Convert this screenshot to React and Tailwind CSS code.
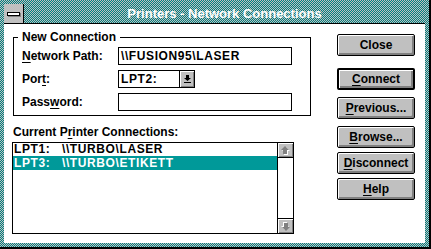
import React from 'react';

const dither = 'bg-[repeating-conic-gradient(#008080_0_25%,#c0c0c0_0_50%)] bg-[length:2px_2px]';

function U({ children }) {
    return <span className="underline underline-offset-[2px] decoration-1">{children}</span>;
}

function PushButton({ children, isDefault, className }) {
    const border = isDefault ? 'border-2' : 'border';
    return (
        <div
            className={`${className} ${border} h-[22px] w-[78px] rounded-[2px] border-black bg-[#c0c0c0] shadow-[inset_1px_1px_0_#fff,inset_-2px_-2px_0_#808080] flex items-center justify-center leading-[14px]`}
        >
            {children}
        </div>
    );
}

function ScrollArrow({ down }) {
    return (
        <svg width="9" height="9" viewBox="0 0 9 9" className={down ? 'rotate-180' : ''}>
            <path d="M5 1 L9 5 L7 5 L7 9 L3 9 L3 5 L1 5 Z" fill="#fff" />
            <path d="M4 0 L8 4 L6 4 L6 8 L2 8 L2 4 L0 4 Z" fill="#808080" />
        </svg>
    );
}

export default function App() {
    return (
        <div className="w-[431px] h-[249px] bg-black font-['Liberation_Sans',Arial,sans-serif] text-[12px] font-bold text-black overflow-hidden">
            <div className={`w-[429px] h-[247px] p-[4px] ${dither}`}>
                <div className="w-[421px] h-[239px] bg-white flex flex-col">
                    {/* Title bar */}
                    <div className={`h-[20px] flex border-b border-black ${dither}`}>
                        <div className="w-[20px] h-full bg-[#c0c0c0] border-r border-black flex items-center justify-center">
                            <div className="w-[13px] h-[4px] border border-black bg-white shadow-[1px_1px_0_#808080]" />
                        </div>
                        <div className="flex-1 flex items-center justify-center text-white text-[13px] leading-[16px]">
                            Printers - Network Connections
                        </div>
                    </div>

                    {/* Client area */}
                    <div className="flex flex-1">
                        <div className="w-[306px] pl-[8px] flex flex-col">
                            {/* New Connection group */}
                            <div className="relative mt-[13px] ml-[1px] w-[298px] h-[79px] border border-black pt-[9px] pl-[8px] flex flex-col gap-[5px]">
                                <span className="absolute left-[4px] top-[-8px] bg-white px-[4px] leading-[14px]">
                                    New Connection
                                </span>
                                <div className="flex items-center h-[18px]">
                                    <span className="w-[96px]"><U>N</U>etwork Path:</span>
                                    <div className="w-[174px] h-[18px] border border-black pl-[2px] leading-[16px] tracking-[0.6px]">
                                        {'\\\\FUSION95\\LASER'}
                                    </div>
                                </div>
                                <div className="flex items-center h-[18px]">
                                    <span className="w-[96px]">Por<U>t</U>:</span>
                                    <div className="w-[77px] h-[18px] border border-black flex">
                                        <div className="flex-1 pl-[2px] leading-[16px] tracking-[0.6px]">LPT2:</div>
                                        <div className="w-[15px] h-full border-l border-black bg-[#c0c0c0] shadow-[inset_1px_1px_0_#fff,inset_-1px_-1px_0_#808080] flex flex-col items-center justify-center gap-[1px]">
                                            <svg width="7" height="6" viewBox="0 0 7 6">
                                                <path d="M2 0 H5 V3 H7 L3.5 6 L0 3 H2 Z" fill="#000" />
                                            </svg>
                                            <div className="w-[7px] h-[1px] bg-black" />
                                        </div>
                                    </div>
                                </div>
                                <div className="flex items-center h-[18px]">
                                    <span className="w-[96px]">Pass<U>w</U>ord:</span>
                                    <div className="w-[174px] h-[18px] border border-black" />
                                </div>
                            </div>

                            <div className="mt-[9px] ml-[1px] leading-[14px]">
                                Current P<U>r</U>inter Connections:
                            </div>

                            {/* Listbox */}
                            <div className="mt-[3px] w-[282px] h-[92px] border border-black flex tracking-[0.6px]">
                                <div className="flex-1 flex flex-col">
                                    <div className="h-[13px] leading-[13px] pl-[1px] flex">
                                        <span className="w-[48px]">LPT1:</span>
                                        <span>{'\\\\TURBO\\LASER'}</span>
                                    </div>
                                    <div className="h-[14px] leading-[14px] pl-[1px] flex bg-[#009999] text-white">
                                        <span className="w-[48px]">LPT3:</span>
                                        <span>{'\\\\TURBO\\ETIKETT'}</span>
                                    </div>
                                </div>
                                <div className="w-[16px] border-l border-black flex flex-col justify-between">
                                    <div className="h-[15px] border-b border-black bg-[#c0c0c0] shadow-[inset_1px_1px_0_#fff,inset_-1px_-1px_0_#808080] flex items-center justify-center">
                                        <ScrollArrow />
                                    </div>
                                    <div className="h-[15px] border-t border-black bg-[#c0c0c0] shadow-[inset_1px_1px_0_#fff,inset_-1px_-1px_0_#808080] flex items-center justify-center">
                                        <ScrollArrow down />
                                    </div>
                                </div>
                            </div>
                        </div>

                        {/* Buttons */}
                        <div className="ml-[27px] flex flex-col">
                            <PushButton className="mt-[10px]">Close</PushButton>
                            <PushButton className="mt-[12px]" isDefault><U>C</U>onnect</PushButton>
                            <PushButton className="mt-[7px]"><U>P</U>revious...</PushButton>
                            <PushButton className="mt-[7px]"><U>B</U>rowse...</PushButton>
                            <PushButton className="mt-[4px]"><U>D</U>isconnect</PushButton>
                            <PushButton className="mt-[4px]"><U>H</U>elp</PushButton>
                        </div>
                    </div>
                </div>
            </div>
        </div>
    );
}
